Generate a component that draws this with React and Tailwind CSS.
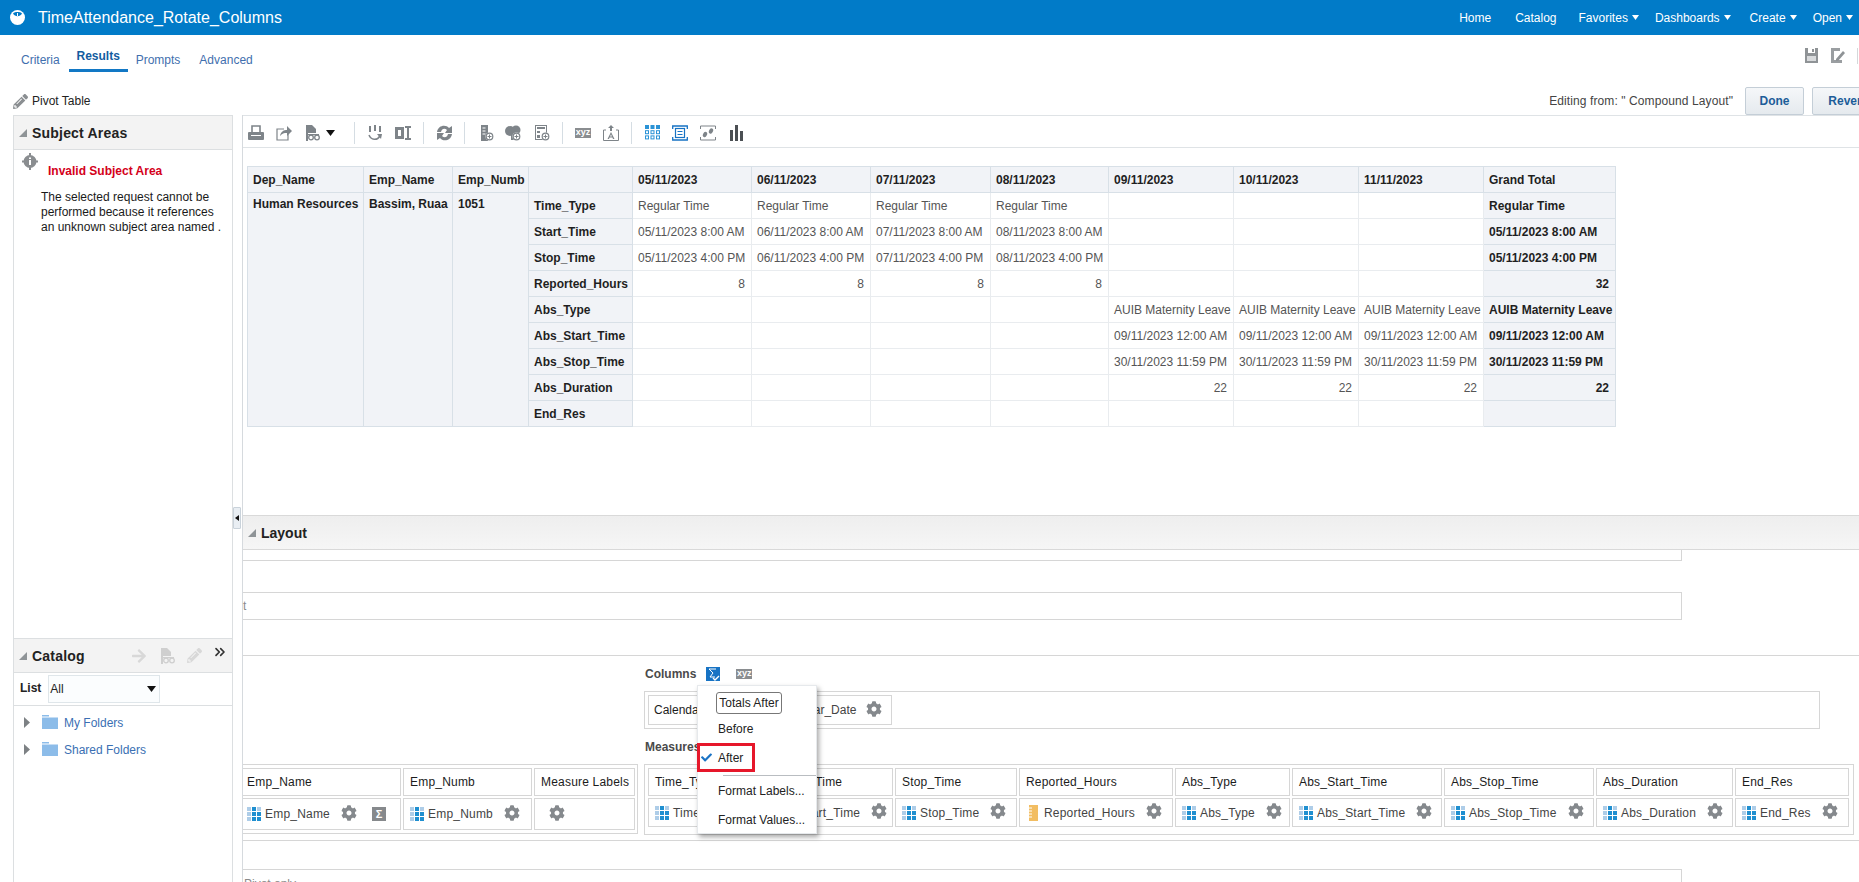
import { ChevronsRight } from 'lucide-react';
import { FaCog, FaCheck, FaPencilAlt, FaArrowRight } from 'react-icons/fa';

const GRAY = '#7e8489';

function Svg({ w = 16, h = 16, vb, className = '', children }) {
	return (
		<svg width={w} height={h} viewBox={vb || `0 0 ${w} ${h}`} className={`shrink-0 ${className}`}>
			{children}
		</svg>
	);
}

function Caret({ color = '#fff', w = 7, h = 5, className = '' }) {
	return (
		<Svg w={w} h={h} className={className}>
			<polygon points={`0,0 ${w},0 ${w / 2},${h}`} fill={color} />
		</Svg>
	);
}

function Corner() {
	return (
		<Svg w={8} h={8}>
			<polygon points="8,0 8,8 0,8" fill="#8f9497" />
		</Svg>
	);
}

function Logo() {
	return (
		<Svg w={15} h={15} className="ml-[10px]">
			<circle cx="7.5" cy="7.5" r="7.5" fill="#fff" />
			<path d="M3 3.5 C5 7 10 7 12 3.5 C10 1.6 5 1.6 3 3.5 Z" fill="#017bc8" />
			<rect x="7" y="3" width="1" height="3" fill="#fff" />
		</Svg>
	);
}

function NavItem({ label, ml, caret }) {
	return (
		<div className={`flex items-center text-white ${ml}`}>
			<span>{label}</span>
			{caret && <Caret className="ml-[4px]" />}
		</div>
	);
}

function Print() {
	return (
		<Svg>
			<path d="M4 1h8v7H4z" fill="none" stroke={GRAY} strokeWidth="1.6" />
			<path d="M1 7h14a1 1 0 0 1 1 1v6a1 1 0 0 1-1 1H1a1 1 0 0 1-1-1V8a1 1 0 0 1 1-1z" fill={GRAY} />
			<rect x="3" y="10" width="10" height="1" fill="#fff" />
		</Svg>
	);
}

function Share() {
	return (
		<Svg>
			<path d="M8 4H1v11h11V9" fill="none" stroke={GRAY} strokeWidth="1.2" />
			<path d="M4 11C5 6 8 5 11 5V1l5 5-5 5V8C8 8 6 8.500 4 11Z" fill={GRAY} />
		</Svg>
	);
}

function DocGlasses({ color = GRAY }) {
	return (
		<Svg w={15} h={16}>
			<path d="M1 0h6l4 4v4H1z" fill={color} />
			<path d="M1 8h2v8H1z" fill={color} />
			<circle cx="6" cy="12.500" r="2.300" fill="none" stroke={color} strokeWidth="1.300" />
			<circle cx="12" cy="12.500" r="2.300" fill="none" stroke={color} strokeWidth="1.300" />
			<rect x="3" y="9" width="11" height="1.300" fill={color} />
		</Svg>
	);
}

function Swap() {
	return (
		<Svg w={14} h={16}>
			<rect x="1" y="1" width="2" height="6" fill={GRAY} />
			<rect x="6" y="0" width="2" height="6" fill={GRAY} />
			<rect x="11" y="1" width="2" height="6" fill={GRAY} />
			<path d="M1 10c2 5 8 6 11 1" fill="none" stroke={GRAY} strokeWidth="1.500" />
			<polygon points="9,9 14,9 13,14" fill={GRAY} />
		</Svg>
	);
}

function Columns2() {
	return (
		<Svg>
			<path d="M0 2h9v12H0zM3 5v6h3V5z" fill={GRAY} fillRule="evenodd" />
			<path d="M10 1h6v2h-2v10h2v2h-6v-2h2V3h-2z" fill={GRAY} />
		</Svg>
	);
}

function Refresh() {
	return (
		<Svg w={15} h={16}>
			<path d="M0 7C1 0 9-1 12 3l3-2v7H8l2-3C8 3 5 3 4 7Z" fill={GRAY} />
			<path d="M15 9C14 16 6 17 3 13l-3 2V8h7L5 11c2 2 5 2 6-2Z" fill={GRAY} />
		</Svg>
	);
}

function Plus({ cx = 10, cy = 12 }) {
	return (
		<>
			<circle cx={cx} cy={cy} r="4" fill="#fff" />
			<circle cx={cx} cy={cy} r="3.300" fill="none" stroke={GRAY} strokeWidth="1.200" />
			<path d={`M${cx - 2} ${cy}h4M${cx} ${cy - 2}v4`} stroke={GRAY} strokeWidth="1" />
		</>
	);
}

function AddList() {
	return (
		<Svg w={13} h={16}>
			<path d="M0 0h7v16H0z" fill={GRAY} />
			<path d="M1.500 3h3M1.500 6h3M1.500 9h3" stroke="#fff" strokeWidth="1" />
			<Plus cx={8.500} cy={11.500} />
		</Svg>
	);
}

function AddGroup() {
	return (
		<Svg>
			<circle cx="5" cy="6" r="5" fill={GRAY} />
			<circle cx="11" cy="5" r="4.500" fill={GRAY} />
			<path d="M6 10h5v5H6z" fill={GRAY} />
			<Plus cx={11.500} cy={11.500} />
		</Svg>
	);
}

function AddCalc() {
	return (
		<Svg w={15} h={16}>
			<rect x="0.500" y="0.500" width="11" height="14" fill="none" stroke={GRAY} />
			<rect x="2" y="2" width="8" height="2" fill={GRAY} />
			<rect x="2" y="6" width="3" height="2" fill={GRAY} />
			<rect x="2" y="10" width="3" height="3" fill={GRAY} />
			<Plus cx={10.500} cy={11.500} />
		</Svg>
	);
}

function Xyz({ className = '' }) {
	return (
		<span className={`w-[16px] h-[10px] shrink-0 flex items-center justify-center bg-[#8a8d90] text-white text-[9px] font-bold leading-none ${className}`}>
			xyz
		</span>
	);
}

function TextUp() {
	return (
		<Svg>
			<path d="M3 5H0.500v10.500h15V5H13" fill="none" stroke={GRAY} strokeWidth="1" />
			<path d="M7 0h2v3h2L8 6 5 3h2z" fill={GRAY} transform="rotate(180 8 3)" />
			<path d="M8 7l3.500 7H10l-.6-1.500H6.600L6 14H4.500zM7.100 11.500h1.800L8 9.300z" fill={GRAY} />
		</Svg>
	);
}

function TableBlue() {
	const cells = [];
	for (let r = 0; r < 3; r++) {
		for (let c = 0; c < 3; c++) {
			const solid = r === 0;
			cells.push(
				<rect
					key={`${r}-${c}`}
					x={c * 5.500 + (solid ? 0 : 0.500)}
					y={r * 5.200 + (solid ? 0 : 0.500)}
					width={solid ? 4 : 3}
					height={solid ? 4 : 3}
					fill={solid ? '#2b93d6' : 'none'}
					stroke="#2b93d6"
					strokeWidth={solid ? 0 : 1}
				/>
			);
		}
	}
	return <Svg w={15} h={15}>{cells}</Svg>;
}

function Compound() {
	return (
		<Svg>
			<path d="M0.700 4V1H15.300V4M0.700 12V15H15.300V12" fill="none" stroke="#1773c4" strokeWidth="1.300" />
			<rect x="3.500" y="3.500" width="9" height="9" fill="none" stroke="#1773c4" strokeWidth="1.200" />
			<path d="M5.500 6.500h5M5.500 9.500h5" stroke="#1773c4" strokeWidth="1" />
		</Svg>
	);
}

function Steps() {
	return (
		<Svg>
			<path d="M0.500 4V1H15.500V4M0.500 12V15H15.500V12" fill="none" stroke={GRAY} strokeWidth="1" />
			<ellipse cx="5" cy="9.500" rx="2" ry="2.800" fill={GRAY} transform="rotate(25 5 9.500)" />
			<ellipse cx="11" cy="6" rx="2" ry="2.800" fill={GRAY} transform="rotate(25 11 6)" />
		</Svg>
	);
}

function Bars() {
	return (
		<Svg w={13} h={16}>
			<rect x="0" y="5" width="3" height="11" fill="#4b4f53" />
			<rect x="5" y="0" width="3" height="16" fill="#4b4f53" />
			<rect x="10" y="6" width="3" height="10" fill="#4b4f53" />
		</Svg>
	);
}

function Sep({ ml }) {
	return <span className={`w-px h-[22px] bg-[#d5dde3] shrink-0 ${ml}`} />;
}

function Toolbar() {
	return (
		<div className="flex items-center h-[33px] border-y border-[#dfe3e6] pt-[2px]">
			<span className="ml-[5px]"><Print /></span>
			<span className="ml-[12px]"><Share /></span>
			<span className="ml-[13px]"><DocGlasses /></span>
			<Caret color="#111" w={9} h={6} className="ml-[6px]" />
			<Sep ml="ml-[19px]" />
			<span className="ml-[13px]"><Swap /></span>
			<span className="ml-[13px]"><Columns2 /></span>
			<Sep ml="ml-[12px]" />
			<span className="ml-[13px]"><Refresh /></span>
			<Sep ml="ml-[12px]" />
			<span className="ml-[16px]"><AddList /></span>
			<span className="ml-[11px]"><AddGroup /></span>
			<span className="ml-[14px]"><AddCalc /></span>
			<Sep ml="ml-[12px]" />
			<Xyz className="ml-[12px]" />
			<span className="ml-[12px]"><TextUp /></span>
			<Sep ml="ml-[12px]" />
			<span className="ml-[13px]"><TableBlue /></span>
			<span className="ml-[12px]"><Compound /></span>
			<span className="ml-[12px]"><Steps /></span>
			<span className="ml-[14px]"><Bars /></span>
		</div>
	);
}

const DAYS = ['05', '06', '07', '08', '09', '10', '11'];
const WIDTHS = [116, 89, 76, 104, 119, 119, 120, 118, 125, 125, 125, 132];

function span(from, to, make) {
	return DAYS.map((d, i) => (i >= from && i <= to ? make(d) : ''));
}

const ROWS = [
	{ label: 'Time_Type', cells: span(0, 3, () => 'Regular Time'), total: 'Regular Time' },
	{ label: 'Start_Time', cells: span(0, 3, (d) => `${d}/11/2023 8:00 AM`), total: '05/11/2023 8:00 AM' },
	{ label: 'Stop_Time', cells: span(0, 3, (d) => `${d}/11/2023 4:00 PM`), total: '05/11/2023 4:00 PM' },
	{ label: 'Reported_Hours', cells: span(0, 3, () => '8'), total: '32', right: true },
	{ label: 'Abs_Type', cells: span(4, 6, () => 'AUIB Maternity Leave'), total: 'AUIB Maternity Leave' },
	{ label: 'Abs_Start_Time', cells: span(4, 6, () => '09/11/2023 12:00 AM'), total: '09/11/2023 12:00 AM' },
	{ label: 'Abs_Stop_Time', cells: span(4, 6, () => '30/11/2023 11:59 PM'), total: '30/11/2023 11:59 PM' },
	{ label: 'Abs_Duration', cells: span(4, 6, () => '22'), total: '22', right: true },
	{ label: 'End_Res', cells: span(0, -1, () => ''), total: '' },
];

const HEAD = 'h-[26px] pl-[5px] pr-[6px] py-0 text-left align-middle font-bold text-[#1f1f1f] bg-[#f1f3f7] border border-[#d8e0e7] whitespace-nowrap overflow-hidden';
const DATA = 'h-[26px] pl-[5px] pr-[6px] py-0 align-middle text-[#555] bg-white border border-[#e9ecef] whitespace-nowrap overflow-hidden';

function PivotTable() {
	return (
		<table className="ml-[4px] table-fixed border-collapse w-[1368px] border border-[#d8e0e7]">
			<colgroup>
				{WIDTHS.map((w, i) => <col key={i} style={{ width: w }} />)}
			</colgroup>
			<tbody>
				<tr>
					<td className={HEAD}>Dep_Name</td>
					<td className={HEAD}>Emp_Name</td>
					<td className={HEAD}>Emp_Numb</td>
					<td className={HEAD}></td>
					{DAYS.map((d) => <td key={d} className={HEAD}>{d}/11/2023</td>)}
					<td className={HEAD}>Grand Total</td>
				</tr>
				{ROWS.map((row, i) => (
					<tr key={row.label}>
						{i === 0 && <td rowSpan={9} className={`${HEAD} !align-top pt-[5px]`}>Human Resources</td>}
						{i === 0 && <td rowSpan={9} className={`${HEAD} !align-top pt-[5px]`}>Bassim, Ruaa</td>}
						{i === 0 && <td rowSpan={9} className={`${HEAD} !align-top pt-[5px]`}>1051</td>}
						<td className={HEAD}>{row.label}</td>
						{row.cells.map((c, j) => (
							<td key={j} className={`${DATA} ${row.right ? 'text-right' : ''}`}>{c}</td>
						))}
						<td className={`${HEAD} ${row.right ? '!text-right' : ''}`}>{row.total}</td>
					</tr>
				))}
			</tbody>
		</table>
	);
}

function Gear({ className = '' }) {
	return <FaCog size={16} color="#85898d" className={`shrink-0 -mt-[3px] ${className}`} />;
}

function GridIcon({ className = 'ml-[6px]' }) {
	const dark = '#1f8fd0';
	const light = '#aecde8';
	const map = [light, dark, light, light, dark, dark, light, dark, dark];
	return (
		<Svg w={14} h={14} className={className}>
			{map.map((fill, i) => (
				<rect key={i} x={(i % 3) * 5} y={Math.floor(i / 3) * 5} width="4" height="4" fill={fill} />
			))}
		</Svg>
	);
}

function Ruler() {
	return (
		<Svg w={9} h={16} className="ml-[9px]">
			<rect width="9" height="16" fill="#f2bd62" />
			<path d="M0 3h3M0 6h3M0 9h3M0 12h3" stroke="#fff" strokeWidth="1" />
		</Svg>
	);
}

function SumGray() {
	return (
		<span className="ml-[15px] w-[14px] h-[14px] shrink-0 flex items-center justify-center bg-[#86898c] text-white text-[11px] font-bold leading-none">
			Σ
		</span>
	);
}

function Column({ w, label, value, measure, sum, h = 'h-[29px]', noLeft }) {
	const chip = `border border-[#d6d6d6] ${noLeft ? 'border-l-0' : ''}`;
	return (
		<div className="flex flex-col gap-[2px] shrink-0" style={{ width: w }}>
			<div className={`${chip} h-[28px] flex items-center ${noLeft ? 'pl-[4px]' : 'pl-[6px]'} text-[#1c1c1c] tracking-[0.2px]`}>{label}</div>
			<div className={`${chip} ${h} flex items-center text-[#444]`}>
				{value ? (
					<>
						{measure ? <Ruler /> : <GridIcon className={noLeft ? 'ml-[4px]' : 'ml-[6px]'} />}
						<span className={`${measure ? 'ml-[6px]' : 'ml-[4px]'} tracking-[0.2px]`}>{value}</span>
						<Gear className="ml-[11px]" />
						{sum && <SumGray />}
					</>
				) : (
					<Gear className="ml-[14px]" />
				)}
			</div>
		</div>
	);
}

function Popup() {
	const item = 'h-[29px] flex items-center pl-[20px] text-[#222]';
	return (
		<div className="absolute left-[454px] top-[29px] z-10 w-[120px] h-[149px] bg-white border border-[#e6e9ec] shadow-[2px_3px_5px_rgba(0,0,0,0.35)] pt-[6px]">
			<div className="ml-[18px] w-[66px] h-[22px] flex items-center justify-center border border-[#777] rounded-[3px] text-[#222]">
				Totals After
			</div>
			<div className={item}>Before</div>
			<div className="w-[58px] h-[29px] -mx-px border-[3px] border-[#e6172a] flex items-center text-[#222]">
				<FaCheck size={11} color="#1a73c5" className="ml-[1px]" />
				<span className="ml-[6px]">After</span>
			</div>
			<div className="ml-[25px] mt-[3px] h-px bg-[#b9bdc1]" />
			<div className={item}>Format Labels...</div>
			<div className={item}>Format Values...</div>
		</div>
	);
}

function LayoutPanel() {
	return (
		<div className="relative h-[186px] mt-[35px] border-y border-[#d6d6d6]">
			<Popup />
			<div className="flex items-center h-[35px] ml-[402px]">
				<span className="font-bold text-[#4a4a4a]">Columns</span>
				<Svg w={14} h={14} className="ml-[10px]">
					<rect width="14" height="14" fill="#1773c4" />
					<path d="M3 2h7M3 2l4 4-3 4h5" fill="none" stroke="#fff" strokeWidth="1" />
					<path d="M7 11l2 2 4-4" fill="none" stroke="#fff" strokeWidth="1.400" />
				</Svg>
				<Xyz className="ml-[16px]" />
			</div>
			<div className="ml-[401px] w-[1176px] h-[38px] border border-[#d6d6d6] p-[3px]">
				<div className="w-[244px] h-[30px] border border-[#d6d6d6] flex items-center text-[#1c1c1c]">
					<span className="ml-[5px]">Calendar_Date</span>
					<GridIcon className="ml-[23px]" />
					<span className="ml-[4px] text-[#444]">Calendar_Date</span>
					<Gear className="ml-[10px]" />
				</div>
			</div>
			<div className="flex items-center h-[35px] ml-[402px] font-bold text-[#4a4a4a]">Measures</div>
			<div className="flex gap-[6px]">
				<div className="w-[395px] h-[70px] border border-l-0 border-[#d6d6d6] flex gap-[2px] py-[3px] pr-[3px]">
					<Column w={158} label="Emp_Name" value="Emp_Name" sum noLeft h="h-[32px]" />
					<Column w={129} label="Emp_Numb" value="Emp_Numb" h="h-[32px]" />
					<Column w={101} label="Measure Labels" h="h-[32px]" />
				</div>
				<div className="w-[1210px] h-[71px] border border-[#d6d6d6] flex gap-[2px] py-[3px] px-[3px]">
					<Column w={125} label="Time_Type" value="Time_Type" />
					<Column w={118} label="Start_Time" value="Start_Time" />
					<Column w={122} label="Stop_Time" value="Stop_Time" />
					<Column w={154} label="Reported_Hours" value="Reported_Hours" measure />
					<Column w={115} label="Abs_Type" value="Abs_Type" />
					<Column w={150} label="Abs_Start_Time" value="Abs_Start_Time" />
					<Column w={150} label="Abs_Stop_Time" value="Abs_Stop_Time" />
					<Column w={137} label="Abs_Duration" value="Abs_Duration" />
					<Column w={114} label="End_Res" value="End_Res" />
				</div>
			</div>
		</div>
	);
}

function Main() {
	return (
		<div className="relative w-[1617px] shrink-0 border-l border-[#d6dade]">
			<Toolbar />
			<div className="h-[367px] pt-[18px]">
				<PivotTable />
			</div>
			<div className="flex items-center h-[35px] border-y border-[#d9d9d9] bg-gradient-to-b from-[#eeeeee] to-[#f6f6f6] pl-[5px]">
				<Corner />
				<span className="ml-[5px] text-[14px] font-bold text-[#222]">Layout</span>
			</div>
			<div className="w-[1439px] h-[11px] border-b border-r border-[#d6d6d6]" />
			<div className="w-[1439px] h-[28px] mt-[31px] border-y border-r border-[#d6d6d6] flex items-center text-[#8a8a8a]">t</div>
			<LayoutPanel />
			<div className="w-[1439px] h-[40px] mt-[28px] border-t border-r border-[#d6d6d6] px-[1px] pt-[8px] text-[#8a8a8a]">Pivot only</div>
			<button className="absolute left-[-10px] top-[392px] w-[8px] h-[22px] bg-[#e9eef3] border border-[#c9d2da] rounded-[1px] flex items-center justify-center">
				<svg width="4" height="6" viewBox="0 0 4 6" className="shrink-0"><polygon points="4,0 4,6 0,3" fill="#111" /></svg>
			</button>
		</div>
	);
}

function PanelHead({ title, children }) {
	return (
		<div className="flex items-center h-[35px] shrink-0 border-y border-[#dcdfe1] bg-[#f3f3f3] pl-[5px]">
			<Corner />
			<span className="ml-[5px] text-[14px] font-bold tracking-[0.2px] text-[#222]">{title}</span>
			{children}
		</div>
	);
}

function FolderRow({ label }) {
	return (
		<div className="flex items-center h-[27px]">
			<Svg w={6} h={11} className="ml-[10px]">
				<polygon points="0,0 6,5.500 0,11" fill="#7d8184" />
			</Svg>
			<Svg w={16} h={14} className="ml-[12px] -mt-[2px]">
				<rect x="0" y="0" width="7" height="1.500" fill="#8cbce9" />
				<rect x="0" y="2.500" width="16" height="11.500" fill="#8cbce9" />
			</Svg>
			<span className="ml-[6px] text-[#3a6fb3]">{label}</span>
		</div>
	);
}

function LeftPanel() {
	return (
		<div className="w-[220px] ml-[13px] mr-[9px] shrink-0 flex flex-col border-x border-[#dcdfe1]">
			<div className="h-[523px] shrink-0">
				<PanelHead title="Subject Areas" />
				<div className="relative">
					<Svg w={16} h={17} className="absolute left-[8px] top-[3px]">
						<circle cx="8" cy="8.500" r="6.500" fill="#8a8d90" />
						<path d="M8 0v3M8 14v3M0 8.500h3M13 8.500h3" stroke="#8a8d90" strokeWidth="2" />
						<rect x="7" y="7" width="2" height="5" fill="#fff" />
						<rect x="7" y="4.500" width="2" height="1.500" fill="#fff" />
					</Svg>
					<p className="pt-[14px] pl-[34px] font-bold text-[#d4001a] leading-[15px]">Invalid Subject Area</p>
					<p className="mt-[11px] pl-[27px] leading-[15px] text-[#1a1a1a]">
						The selected request cannot be<br />
						performed because it references<br />
						an unknown subject area named .
					</p>
				</div>
			</div>
			<PanelHead title="Catalog">
				<FaArrowRight size={16} color="#d8d8d8" className="ml-[46px]" />
				<span className="ml-[13px] opacity-40"><DocGlasses color="#9a9a9a" /></span>
				<FaPencilAlt size={15} color="#d8d8d8" className="ml-[12px]" />
				<ChevronsRight size={16} color="#333" strokeWidth={2.5} className="ml-[10px] -mt-[7px]" />
			</PanelHead>
			<div className="flex items-center h-[33px] shrink-0 border-b border-[#dcdfe1] pl-[6px]">
				<span className="font-bold text-[#222] -mt-[3px]">List</span>
				<div className="ml-[7px] w-[112px] h-[28px] border border-[#dfe6ea] bg-[#fbfdfe] flex items-center pl-[1px] text-[#222]">
					<span>All</span>
					<Caret color="#111" w={9} h={6} className="ml-auto mr-[3px]" />
				</div>
			</div>
			<div className="pt-[3px]">
				<FolderRow label="My Folders" />
				<FolderRow label="Shared Folders" />
			</div>
		</div>
	);
}

export default function App() {
	return (
		<div className="relative w-[1859px] h-[882px] overflow-hidden bg-white text-[12px] leading-none font-['Liberation_Sans',Arial,sans-serif]">
			<div className="flex items-center h-[35px] bg-[#017bc8]">
				<Logo />
				<span className="ml-[13px] text-[16px] text-white">TimeAttendance_Rotate_Columns</span>
				<div className="flex items-center ml-auto mr-[6px]">
					<NavItem label="Home" />
					<NavItem label="Catalog" ml="ml-[24px]" />
					<NavItem label="Favorites" ml="ml-[22px]" caret />
					<NavItem label="Dashboards" ml="ml-[16px]" caret />
					<NavItem label="Create" ml="ml-[19px]" caret />
					<NavItem label="Open" ml="ml-[16px]" caret />
				</div>
			</div>

			<div className="flex h-[46px]">
				<div className="flex items-start ml-[21px] pt-[18px]">
					<span className="text-[#3f6fae] mt-[1px]">Criteria</span>
					<div className="ml-[9px] flex flex-col items-center w-[59px]">
						<span className="font-bold text-[#135c9f] -mt-[3px]">Results</span>
						<span className="mt-[7px] w-full h-[3px] bg-[#1278c5]" />
					</div>
					<span className="ml-[8px] mt-[1px] text-[#3f6fae]">Prompts</span>
					<span className="ml-[19px] mt-[1px] text-[#3f6fae]">Advanced</span>
				</div>
				<div className="ml-auto flex items-start pt-[13px]">
					<Svg w={13} h={15}>
						<path d="M0 0h13v15H0z" fill="#8f9396" />
						<rect x="3" y="0" width="7" height="5" fill="#fff" />
						<rect x="7" y="1" width="2" height="3" fill="#8f9396" />
						<rect x="2" y="8" width="9" height="5" fill="#d8dadc" />
					</Svg>
					<Svg w={14} h={15} className="ml-[13px]">
						<path d="M0 0h9v3H3v9h8v3H0z" fill="#9a9ea1" />
						<path d="M5 11l7-8 2 2-7 8H5z" fill="#8f9396" />
					</Svg>
					<span className="ml-[12px] w-px h-[16px] bg-[#d5d8da]" />
					<span className="w-px" />
				</div>
			</div>

			<div className="h-[34px] pt-[6px]">
				<div className="flex items-center h-[28px]">
					<FaPencilAlt size={15} color="#8b8f92" className="ml-[13px]" />
					<span className="ml-[4px] text-[#222]">Pivot Table</span>
					<span className="ml-auto text-[#444] tracking-[0.1px]">Editing from: " Compound Layout"</span>
					<button className="ml-[12px] w-[59px] h-[28px] border border-[#c4ced7] rounded-[2px] bg-gradient-to-b from-[#f5f7f9] to-[#e5eaee] font-bold text-[#1d5d99]">
						Done
					</button>
					<button className="ml-[8px] -mr-[23px] w-[70px] h-[28px] border border-[#c4ced7] rounded-[2px] bg-gradient-to-b from-[#f5f7f9] to-[#e5eaee] font-bold text-[#1d5d99]">
						Revert
					</button>
				</div>
			</div>

			<div className="flex h-[767px]">
				<LeftPanel />
				<Main />
			</div>
		</div>
	);
}
